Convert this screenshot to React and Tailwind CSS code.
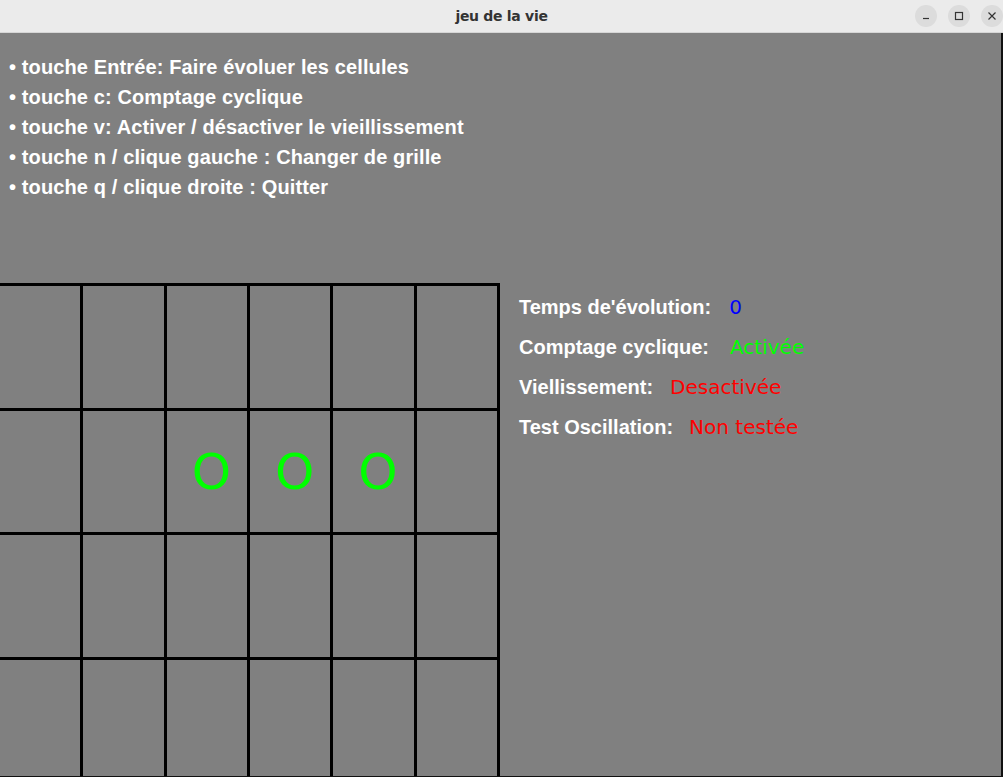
import React from "react";

const commands = [
  "touche Entrée: Faire évoluer les cellules",
  "touche c: Comptage cyclique",
  "touche v: Activer / désactiver le vieillissement",
  "touche n / clique gauche : Changer de grille",
  "touche q / clique droite : Quitter",
];

const stats = [
  { label: "Temps de'évolution:", value: "0", color: "text-[#0000ff]", gap: "ml-[18px]" },
  { label: "Comptage cyclique:", value: "Activée", color: "text-[#00ff00]", gap: "ml-[21px]" },
  { label: "Viellissement:", value: "Desactivée", color: "text-[#ff0000]", gap: "ml-[17px]" },
  { label: "Test Oscillation:", value: "Non testée", color: "text-[#ff0000]", gap: "ml-[16px]" },
];

// 4 rows x 6 columns, live cells marked with 1
const board = [
  [0, 0, 0, 0, 0, 0],
  [0, 0, 1, 1, 1, 0],
  [0, 0, 0, 0, 0, 0],
  [0, 0, 0, 0, 0, 0],
];

const TitleBar = () => (
  <div className="h-[33px] bg-[#ebebeb] flex items-center relative border-b border-[#d6d6d6]">
    <div className="flex-1 text-center text-[14px] font-bold text-[#333] font-['DejaVu_Sans',sans-serif] tracking-[-0.3px]">
      jeu de la vie
    </div>
    <div className="absolute right-[0px] top-[5px] flex gap-[11px]">
      <button className="w-[22px] h-[22px] rounded-full bg-[#dcdcdc] flex items-center justify-center">
        <svg width="10" height="10" viewBox="0 0 10 10">
          <path d="M2 7.5h6" stroke="#333" strokeWidth="1.2" />
        </svg>
      </button>
      <button className="w-[22px] h-[22px] rounded-full bg-[#dcdcdc] flex items-center justify-center">
        <svg width="10" height="10" viewBox="0 0 10 10">
          <rect x="1.5" y="1.5" width="7" height="7" fill="none" stroke="#333" strokeWidth="1.2" />
        </svg>
      </button>
      <button className="w-[22px] h-[22px] rounded-full bg-[#dcdcdc] flex items-center justify-center">
        <svg width="10" height="10" viewBox="0 0 10 10">
          <path d="M1.5 1.5l7 7M8.5 1.5l-7 7" stroke="#333" strokeWidth="1.2" />
        </svg>
      </button>
    </div>
  </div>
);

export default function App() {
  return (
    <div className="w-[1003px] h-[777px] overflow-hidden flex flex-col bg-[#808080] font-['Liberation_Sans',Arial,sans-serif]">
      <TitleBar />
      <div className="flex-1 flex flex-col overflow-hidden border-r-2 border-b border-[#111]">
        {/* Key help */}
        <ul className="pt-[19px] pl-[9px] text-white font-bold text-[20px] leading-[30px] tracking-[0.12px]">
          {commands.map((c) => (
            <li key={c}>• {c}</li>
          ))}
        </ul>

        <div className="flex mt-[81px]">
          {/* Grid */}
          <div className="ml-[-3px] bg-black pt-[3px] pl-[3px] pr-[3px] grid grid-cols-[repeat(6,80.33px)] auto-rows-[121.67px] gap-[3px] shrink-0">
            {board.flat().map((alive, i) => (
              <div key={i} className="bg-[#808080] flex items-center justify-center">
                {alive ? (
                  <span className="text-[#00ff00] text-[50px] leading-none font-['DejaVu_Sans',sans-serif] ml-[9px] mt-[2px]">
                    O
                  </span>
                ) : null}
              </div>
            ))}
          </div>

          {/* Status */}
          <div className="ml-[19px] pt-[4px] flex flex-col">
            {stats.map((s) => (
              <div key={s.label} className="h-[40px] flex items-center">
                <span className="text-white font-bold text-[20px]">{s.label}</span>
                <span className={`${s.gap} ${s.color} text-[20px] font-['DejaVu_Sans',sans-serif]`}>
                  {s.value}
                </span>
              </div>
            ))}
          </div>
        </div>
      </div>
    </div>
  );
}
